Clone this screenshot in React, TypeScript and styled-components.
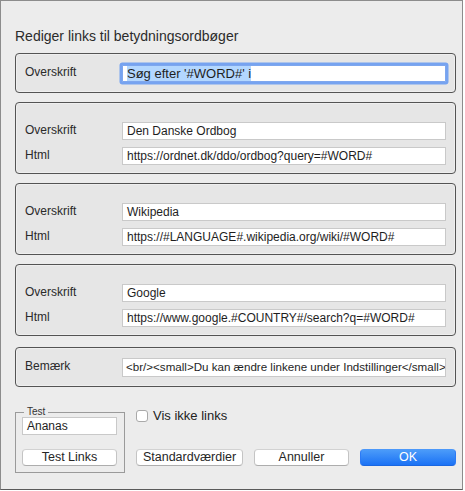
import React from 'react'
import styled, { createGlobalStyle } from 'styled-components'

const GlobalStyle = createGlobalStyle`
  *, *::before, *::after { box-sizing: border-box; margin: 0; padding: 0; }
  body {
    background: #ffffff;
    font-family: "Liberation Sans", Arial, sans-serif;
    color: #262626;
  }
`

const Window = styled.div`
  width: 463px;
  height: 490px;
  border: 1px solid #8c8c8c;
  border-bottom-color: #5a5a5a;
  background: #ececec;
  padding: 0 6px 0 14px;
  display: flex;
  flex-direction: column;
`

const Title = styled.h1`
  font-size: 14px;
  font-weight: normal;
  line-height: 18px;
  color: #2b2b2b;
  margin: 26px 0 8px 0;
`

const Boxes = styled.div`
  display: flex;
  flex-direction: column;
  gap: 9px;
  width: 441px;
`

const Group = styled.section<{ $tall?: boolean; $push?: number }>`
  height: ${p => (p.$tall ? 72 : 40)}px;
  margin-top: ${p => p.$push ?? 0}px;
  border: 1px solid #545454;
  border-radius: 4px;
  background: #e6e6e6;
  box-shadow: inset 0 0 0 1px rgba(255, 255, 255, 0.35);
  padding: ${p => (p.$tall ? '19px 9px 8px 9px' : '0 9px')};
  display: flex;
  flex-direction: column;
  justify-content: ${p => (p.$tall ? 'flex-start' : 'center')};
  gap: 7px;
`

const Row = styled.div`
  display: flex;
  align-items: center;
`

const Label = styled.span`
  width: 97px;
  flex-shrink: 0;
  font-size: 12px;
  color: #2a2a2a;
  margin-top: -2px;
`

const Field = styled.div<{ $focused?: boolean; $h?: number; $small?: boolean }>`
  flex: 1;
  height: ${p => p.$h ?? 18}px;
  background: #ffffff;
  border: 1px solid ${p => (p.$focused ? '#7ea7ee' : '#c9c9c9')};
  box-shadow: ${p => (p.$focused ? '0 0 0 2.5px #76a3f0' : 'none')};
  border-radius: ${p => (p.$focused ? 1 : 0)}px;
  font-size: ${p => (p.$small ? 11.6 : 12)}px;
  line-height: 16px;
  padding: 0 ${p => (p.$small ? 3 : 4)}px;
  white-space: nowrap;
  overflow: hidden;
  color: #1e1e1e;
  display: flex;
  align-items: center;
`

const Selected = styled.span`
  background: #b3d7ff;
  font-size: 13px;
  line-height: 17px;
`

const Bottom = styled.div`
  display: flex;
  margin-top: 20px;
  width: 441px;
`

const TestSet = styled.fieldset`
  width: 109px;
  border: 1px solid #9a9a9a;
  padding: 0 7px 6px 6px;
  display: flex;
  flex-direction: column;
  gap: 14px;
  legend {
    font-size: 10px;
    color: #333;
    margin-left: 2px;
    padding: 0 3px;
    line-height: 10px;
  }
`

const Side = styled.div`
  flex: 1;
  margin-left: 11px;
  display: flex;
  flex-direction: column;
  justify-content: space-between;
  padding: 1px 0 7px 0;
`

const Check = styled.label`
  display: flex;
  align-items: center;
  gap: 5px;
  font-size: 13px;
  color: #222;
`

const Box = styled.span`
  width: 12px;
  height: 12px;
  background: #fff;
  border: 1px solid #a9a9a9;
  border-radius: 3px;
`

const Buttons = styled.div`
  display: flex;
  gap: 11px;
`

const Button = styled.button<{ $w: number; $primary?: boolean }>`
  width: ${p => p.$w}px;
  height: 17px;
  border-radius: 4px;
  font-family: "Liberation Sans", Arial, sans-serif;
  font-size: 12.5px;
  line-height: 15px;
  color: ${p => (p.$primary ? '#ffffff' : '#262626')};
  border: ${p => (p.$primary ? '1px solid #2c7af5' : '1px solid #c4c4c4')};
  border-top-color: ${p => (p.$primary ? '#4c98f9' : '#d2d2d2')};
  border-bottom-color: ${p => (p.$primary ? '#1a66e0' : '#adadad')};
  background: ${p =>
    p.$primary ? 'linear-gradient(#4b9bf9, #1b72f5)' : '#ffffff'};
`

export default function App() {
  return (
    <>
      <GlobalStyle />
      <Window>
        <Title>Rediger links til betydningsordbøger</Title>
        <Boxes>
          <Group>
            <Row>
              <Label>Overskrift</Label>
              <Field $focused $h={17}>
                <Selected>Søg efter '#WORD#' i</Selected>
              </Field>
            </Row>
          </Group>
          <Group $tall>
            <Row>
              <Label>Overskrift</Label>
              <Field>Den Danske Ordbog</Field>
            </Row>
            <Row>
              <Label>Html</Label>
              <Field>https://ordnet.dk/ddo/ordbog?query=#WORD#</Field>
            </Row>
          </Group>
          <Group $tall>
            <Row>
              <Label>Overskrift</Label>
              <Field>Wikipedia</Field>
            </Row>
            <Row>
              <Label>Html</Label>
              <Field>https://#LANGUAGE#.wikipedia.org/wiki/#WORD#</Field>
            </Row>
          </Group>
          <Group $tall>
            <Row>
              <Label>Overskrift</Label>
              <Field>Google</Field>
            </Row>
            <Row>
              <Label>Html</Label>
              <Field>https://www.google.#COUNTRY#/search?q=#WORD#</Field>
            </Row>
          </Group>
          <Group $push={2}>
            <Row>
              <Label>Bemærk</Label>
              <Field $h={19} $small>
                {'<br/><small>Du kan ændre linkene under Indstillinger</small>'}
              </Field>
            </Row>
          </Group>
        </Boxes>
        <Bottom>
          <TestSet>
            <legend>Test</legend>
            <Field>Ananas</Field>
            <Button $w={95}>Test Links</Button>
          </TestSet>
          <Side>
            <Check>
              <Box />
              Vis ikke links
            </Check>
            <Buttons>
              <Button $w={107}>Standardværdier</Button>
              <Button $w={95}>Annuller</Button>
              <Button $w={96} $primary>OK</Button>
            </Buttons>
          </Side>
        </Bottom>
      </Window>
    </>
  )
}
